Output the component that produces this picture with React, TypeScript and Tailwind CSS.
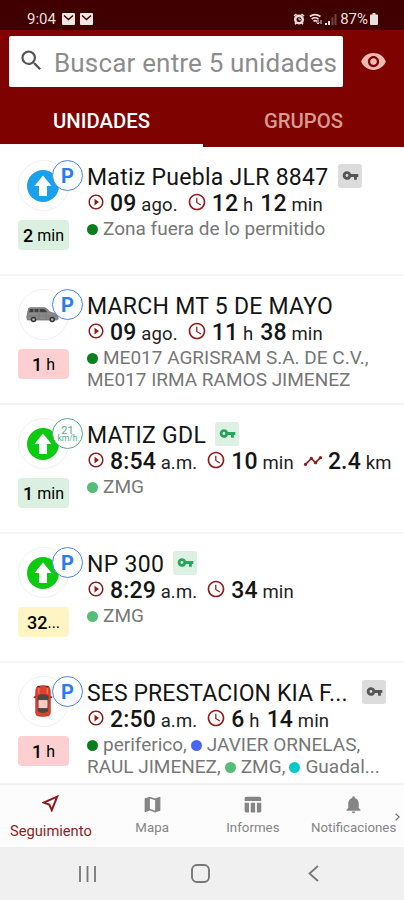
import { ReactNode } from 'react';
import { twMerge } from 'tailwind-merge';
import {
  MdVpnKey,
  MdVisibility,
  MdSearch,
  MdMap,
  MdTableChart,
  MdNotifications,
  MdAccessTime,
  MdPlayCircleOutline,
  MdTimeline,
} from 'react-icons/md';

interface Zone {
  color: string;
  name: string;
}

interface Unit {
  name: string;
  nameClass: string;
  icon: ReactNode;
  speed?: number;
  age: [string, string];
  ageClass: string;
  engine?: 'on' | 'off';
  start: [string, string];
  duration: [string, string][];
  distance?: [string, string];
  zones: Zone[][];
}

const ArrowIcon = ({ className }: { className: string }) => (
  <svg viewBox="0 0 32 32" className={twMerge('w-8 h-8 -ml-0.5', className)}>
    <circle cx="16" cy="16" r="16" fill="currentColor" />
    <path d="M16 5.5 24.5 16H20v10h-8V16H7.5Z" fill="#fff" />
  </svg>
);

const VanIcon = () => (
  <svg viewBox="0 0 34 16" className="w-[34px] h-4 -ml-px">
    <path
      d="M2.5 1.5Q3 .7 4.5.7H18q1.5 0 2.8 1.3L24 5.2l5.2 1.2q2.3.6 2.6 2.4l.4 3.2-2 1H1.4L.8 9.8Z"
      fill="#8b8b8b"
      stroke="#5f5f5f"
      strokeWidth=".7"
    />
    <path d="M3.8 2h3.7v3.3H3ZM8.5 2h4v3.3h-4ZM13.6 2h4.2q1 .2 1.7 1l2 2.3h-7.9Z" fill="#414141" />
    <path d="M1.5 9h29M13 6v6M20 6v6" stroke="#747474" strokeWidth=".6" />
    <circle cx="7.5" cy="12.5" r="2.8" fill="#333" />
    <circle cx="7.5" cy="12.5" r="1.3" fill="#b5b5b5" />
    <circle cx="26.2" cy="12.5" r="2.8" fill="#333" />
    <circle cx="26.2" cy="12.5" r="1.3" fill="#b5b5b5" />
  </svg>
);

const CarIcon = () => (
  <svg viewBox="0 0 20 34" className="w-5 h-8 -ml-0.5 -mt-0.5">
    <path d="M0 12.5 3 11v2.5L.3 14ZM20 12.5 17 11v2.5l2.7.5Z" fill="#a52b22" />
    <path
      d="M4 1.5Q10-.3 16 1.5q1.8 1.5 1.8 6.5v21q0 3-1.8 3.7-6 1.3-12 0-1.8-.7-1.8-3.7V8q0-5 1.8-6.5Z"
      fill="#e0412f"
      stroke="#a52b22"
      strokeWidth=".7"
    />
    <path d="M5.5 3v6M14.5 3v6" stroke="#f37564" strokeWidth="1.4" />
    <path d="M4 11.5q6-4 12 0L15.5 28q-5.500 3.500-11 0Z" fill="#4e4546" />
    <path d="M5.2 16h9.600v8.500H5.200Z" fill="#f8cdbd" />
    <path d="M4.2 1.7h2.400M13.400 1.700h2.400" stroke="#2f2f2f" strokeWidth="1.4" />
  </svg>
);

const units: Unit[] = [
  {
    name: 'Matiz Puebla JLR 8847',
    nameClass: 'tracking-[0.28px] mr-px',
    icon: <ArrowIcon className="text-[#1ba0ec]" />,
    age: ['2', 'min'],
    ageClass: 'bg-[#dcf0e2]',
    engine: 'off',
    start: ['09', 'ago.'],
    duration: [['12', 'h'], ['12', 'min']],
    zones: [[{ color: 'bg-[#0a7d1d]', name: 'Zona fuera de lo permitido' }]],
  },
  {
    name: 'MARCH MT 5 DE MAYO',
    nameClass: 'tracking-[0.27px]',
    icon: <VanIcon />,
    age: ['1', 'h'],
    ageClass: 'bg-[#fdcfd1]',
    start: ['09', 'ago.'],
    duration: [['11', 'h'], ['38', 'min']],
    zones: [
      [{ color: 'bg-[#0a7d1d]', name: 'ME017 AGRISRAM S.A. DE C.V.,' }],
      [{ color: '', name: 'ME017 IRMA RAMOS JIMENEZ' }],
    ],
  },
  {
    name: 'MATIZ GDL',
    nameClass: 'tracking-[0.3px]',
    icon: <ArrowIcon className="text-[#0cca10]" />,
    speed: 21,
    age: ['1', 'min'],
    ageClass: 'bg-[#dcf0e2]',
    engine: 'on',
    start: ['8:54', 'a.m.'],
    duration: [['10', 'min']],
    distance: ['2.4', 'km'],
    zones: [[{ color: 'bg-[#56bd78]', name: 'ZMG' }]],
  },
  {
    name: 'NP 300',
    nameClass: 'tracking-[0.3px]',
    icon: <ArrowIcon className="text-[#0cca10]" />,
    age: ['32', '...'],
    ageClass: 'bg-[#fff5c4]',
    engine: 'on',
    start: ['8:29', 'a.m.'],
    duration: [['34', 'min']],
    zones: [[{ color: 'bg-[#56bd78]', name: 'ZMG' }]],
  },
  {
    name: 'SES PRESTACION KIA F...',
    nameClass: 'tracking-[0.1px] w-[266px]',
    icon: <CarIcon />,
    age: ['1', 'h'],
    ageClass: 'bg-[#fdcfd1]',
    engine: 'off',
    start: ['2:50', 'a.m.'],
    duration: [['6', 'h'], ['14', 'min']],
    zones: [
      [
        { color: 'bg-[#0a7d1d]', name: 'periferico,' },
        { color: 'bg-[#4b66f2]', name: 'JAVIER ORNELAS,' },
      ],
      [
        { color: '', name: 'RAUL JIMENEZ,' },
        { color: 'bg-[#56bd78]', name: 'ZMG,' },
        { color: 'bg-[#08c8cb]', name: 'Guadal...' },
      ],
    ],
  },
];

const Value = ({ value }: { value: [string, string] }) => (
  <span className="whitespace-pre">
    <span className="text-[23px] font-medium tracking-[0.15px]">{value[0]}</span>
    <span className="text-[18.5px] tracking-[0.15px] text-[#222]"> {value[1]}</span>
  </span>
);

const StatusBar = () => (
  <div className="flex items-center justify-between h-[30px] bg-[#400001] pl-[27px] pr-[26px] pt-2 text-[#eadfdd]">
    <div className="flex items-center">
      <span className="text-[15px] w-[35px]">9:04</span>
      {[0, 1].map((i) => (
        <svg key={i} viewBox="0 0 13 12" className="w-[13px] h-3 mr-[5px]">
          <rect width="13" height="12" rx="1" fill="#f2e6e4" />
          <path d="m2 2.5 4.5 4L11 2.5" fill="none" stroke="#400001" strokeWidth="1.5" />
        </svg>
      ))}
    </div>
    <div className="flex items-center">
      <svg viewBox="0 0 12 12" className="w-3 h-3" fill="currentColor">
        <path d="M.5 2.5 3 .5l1 1-2.5 2ZM11.5 2.5 9 .5l-1 1 2.5 2ZM1.5 10l1-1 1.5 1-1.5 2ZM10.5 10l-1-1L8 10l1.5 2Z" />
        <circle cx="6" cy="6.5" r="5" />
        <circle cx="6" cy="6.5" r="2.5" fill="#400001" />
        <path d="M6 4.5v2.3h2" stroke="currentColor" fill="none" />
      </svg>
      <svg viewBox="0 0 14 12" className="w-3.5 h-3 ml-1" fill="none" stroke="currentColor" strokeWidth="1.6">
        <path d="M.8 3.5Q6 -.3 11.5 3.5M2.7 6Q6 3.5 9.5 6M4.5 8.3Q6 7 8 8.3" />
        <path d="M9 6.5v4.5M7.5 9.5 9 11l1.5-1.5M12 11V7" strokeWidth="1" />
      </svg>
      <svg viewBox="0 0 12 12" className="w-3 h-3 ml-0.5" fill="currentColor">
        <path d="M0 10h2v2H0ZM3 8h2v4H3Z" />
        <path d="M6.5 4.5h2V12h-2ZM9.5 1h2v11h-2Z" opacity=".3" />
      </svg>
      <span className="text-[15px] ml-[3px]">87%</span>
      <svg viewBox="0 0 8 12" className="w-2 h-3 ml-0.5" fill="currentColor">
        <path d="M2.5 0h3v1.5H7q1 0 1 1V11q0 1-1 1H1q-1 0-1-1V2.5q0-1 1-1h1.5Z" />
      </svg>
    </div>
  </div>
);

const Header = () => (
  <header className="h-[117px] bg-[#7e0300]">
    <div className="flex pl-[9px] pt-[6px]">
      <div className="flex items-center w-[334px] h-[51px] rounded-xs bg-white pl-[9px]">
        <MdSearch className="size-[27px] -mt-0.5 text-[#555]" />
        <span className="ml-[9px] pt-0.5 text-[26px] leading-none tracking-[0.17px] text-[#8d8d8d] whitespace-nowrap">
          Buscar entre 5 unidades
        </span>
      </div>
      <MdVisibility className="size-[27px] ml-[17px] mt-3 text-[#edbbb4]" />
    </div>
    <div className="flex h-[60px] text-[20.3px] font-medium text-center leading-[68px]">
      <div className="w-[203px] h-[60px] border-b-3 border-white text-white">UNIDADES</div>
      <div className="flex-1 text-[#d99a91]">GRUPOS</div>
    </div>
  </header>
);

const UnitRow = ({ unit }: { unit: Unit }) => {
  return (
    <div className="flex h-[129px] shrink-0 border-b-2 border-[#f5f5f5] pl-[18px]">
      <div className="w-[69px] shrink-0 pt-[13px]">
        <div className="relative flex items-center justify-center size-[51px] rounded-full border border-[#f1f1f1]">
          {unit.icon}
          {unit.speed ? (
            <div className="absolute left-[33px] top-[-1px] flex flex-col items-center justify-center size-[31px] rounded-full border-[1.5px] border-[#4fae86] bg-white text-[#4fae86]">
              <span className="text-[11px] leading-[9px]">{unit.speed}</span>
              <span className="text-[8.5px] leading-[7px]">km/h</span>
            </div>
          ) : (
            <div className="absolute left-[33px] top-[-1px] flex items-center justify-center size-[31px] rounded-full border-[1.5px] border-[#4d84e0] bg-[#fbfdff] text-[20px] font-bold text-[#2d7bf0]">
              P
            </div>
          )}
        </div>
        <div
          className={twMerge(
            'flex items-center justify-center w-[51px] h-[30px] mt-[9px] rounded-[4px] whitespace-pre',
            unit.ageClass
          )}
        >
          <span className="text-[18px] font-medium">{unit.age[0]}</span>
          <span className="text-[16px] pt-px">
            {unit.age[1] === '...' ? '...' : ` ${unit.age[1]}`}
          </span>
        </div>
      </div>

      <div className="flex-1 min-w-0 pt-[17px] whitespace-nowrap text-[#151515]">
        <div className="flex items-center h-[27px]">
          <span className={twMerge('text-[23px] leading-[27px]', unit.nameClass)}>{unit.name}</span>
          {unit.engine && (
            <span
              className={twMerge(
                'flex items-center justify-center size-6 -mt-1 ml-[9px] rounded-[3px]',
                unit.engine === 'on' ? 'bg-[#dcf1e3] text-[#27a457]' : 'bg-[#dcdcdc] text-[#555]'
              )}
            >
              <MdVpnKey className="size-[17px]" />
            </span>
          )}
        </div>
        <div className="flex items-center h-[26px] mb-px">
          <MdPlayCircleOutline className="size-[18px] mr-[5px] -mt-1 text-[#8e1c1c]" />
          <Value value={unit.start} />
          <MdAccessTime className="size-5 ml-[9px] mr-[5px] -mt-1 text-[#8e1c1c]" />
          {unit.duration.map((d, i) => (
            <span key={i} className={i ? 'ml-[7px]' : ''}>
              <Value value={d} />
            </span>
          ))}
          {unit.distance && (
            <>
              <MdTimeline className="size-5 ml-[9px] mr-[5px] -mt-0.5 text-[#8e1c1c]" />
              <Value value={unit.distance} />
            </>
          )}
        </div>
        {unit.zones.map((line, i) => (
          <div key={i} className="flex items-center h-[22px] text-[19px] leading-[22px] text-[#777]">
            {line.map((zone) => (
              <span key={zone.name} className="flex items-center mr-[4px]">
                {zone.color && <i className={twMerge('size-[11px] rounded-full mr-[5px]', zone.color)} />}
                {zone.name}
              </span>
            ))}
          </div>
        ))}
      </div>
    </div>
  );
};

const BottomNav = () => {
  const tabs = [
    { label: 'Mapa', Icon: MdMap },
    { label: 'Informes', Icon: MdTableChart },
    { label: 'Notificaciones', Icon: MdNotifications },
  ];
  return (
    <nav className="relative flex h-[64px] bg-[#fcfcfc] border-t-2 border-[#f1f1f1] text-[#858585]">
      <div className="flex flex-col items-center w-[102px] text-[#8e1c1c]">
        <svg viewBox="0 0 17 17" className="size-[17px] mt-[10px]" fill="none" stroke="currentColor" strokeWidth="2">
          <path d="M15.2 1.600 1.800 7.600 7.300 9.500 9.800 15.200Z" />
        </svg>
        <span className="mt-[9px] text-[14.7px] leading-[20px]">Seguimiento</span>
      </div>
      {tabs.map(({ label, Icon }) => (
        <div key={label} className="flex flex-col items-center w-[101px]">
          <Icon className="size-[21px] mt-[9px]" />
          <span className="mt-[5px] text-[13.3px] leading-4">{label}</span>
        </div>
      ))}
      <svg viewBox="0 0 5 8" className="absolute right-1 top-7 w-[5px] h-2" fill="none" stroke="#777" strokeWidth="1.2">
        <path d="m.7.7 3.500 3.300L.7 7.300" />
      </svg>
    </nav>
  );
};

const SystemNav = () => (
  <div className="flex items-center h-[53px] bg-[#f0f0f0] pl-[79px]">
    <svg viewBox="0 0 17 18" className="w-[17px] h-[18px]" stroke="#777" strokeWidth="1.8">
      <path d="M1 1v16M8.500 1v16M16 1v16" />
    </svg>
    <svg viewBox="0 0 19 19" className="size-[19px] ml-[95px]" fill="none" stroke="#777" strokeWidth="1.9">
      <rect x="1" y="1" width="17" height="17" rx="5" />
    </svg>
    <svg viewBox="0 0 11 17" className="w-[11px] h-[17px] ml-[98px]" fill="none" stroke="#777" strokeWidth="1.8">
      <path d="M10 1 1.500 8.500 10 16" />
    </svg>
  </div>
);

export default function App() {
  return (
    <div className="flex flex-col w-[404px] h-[900px] overflow-hidden bg-white font-['Roboto',sans-serif]">
      <StatusBar />
      <Header />
      <main className="flex flex-col flex-1 min-h-0 overflow-hidden">
        {units.map((unit) => (
          <UnitRow key={unit.name} unit={unit} />
        ))}
      </main>
      <BottomNav />
      <SystemNav />
    </div>
  );
}
